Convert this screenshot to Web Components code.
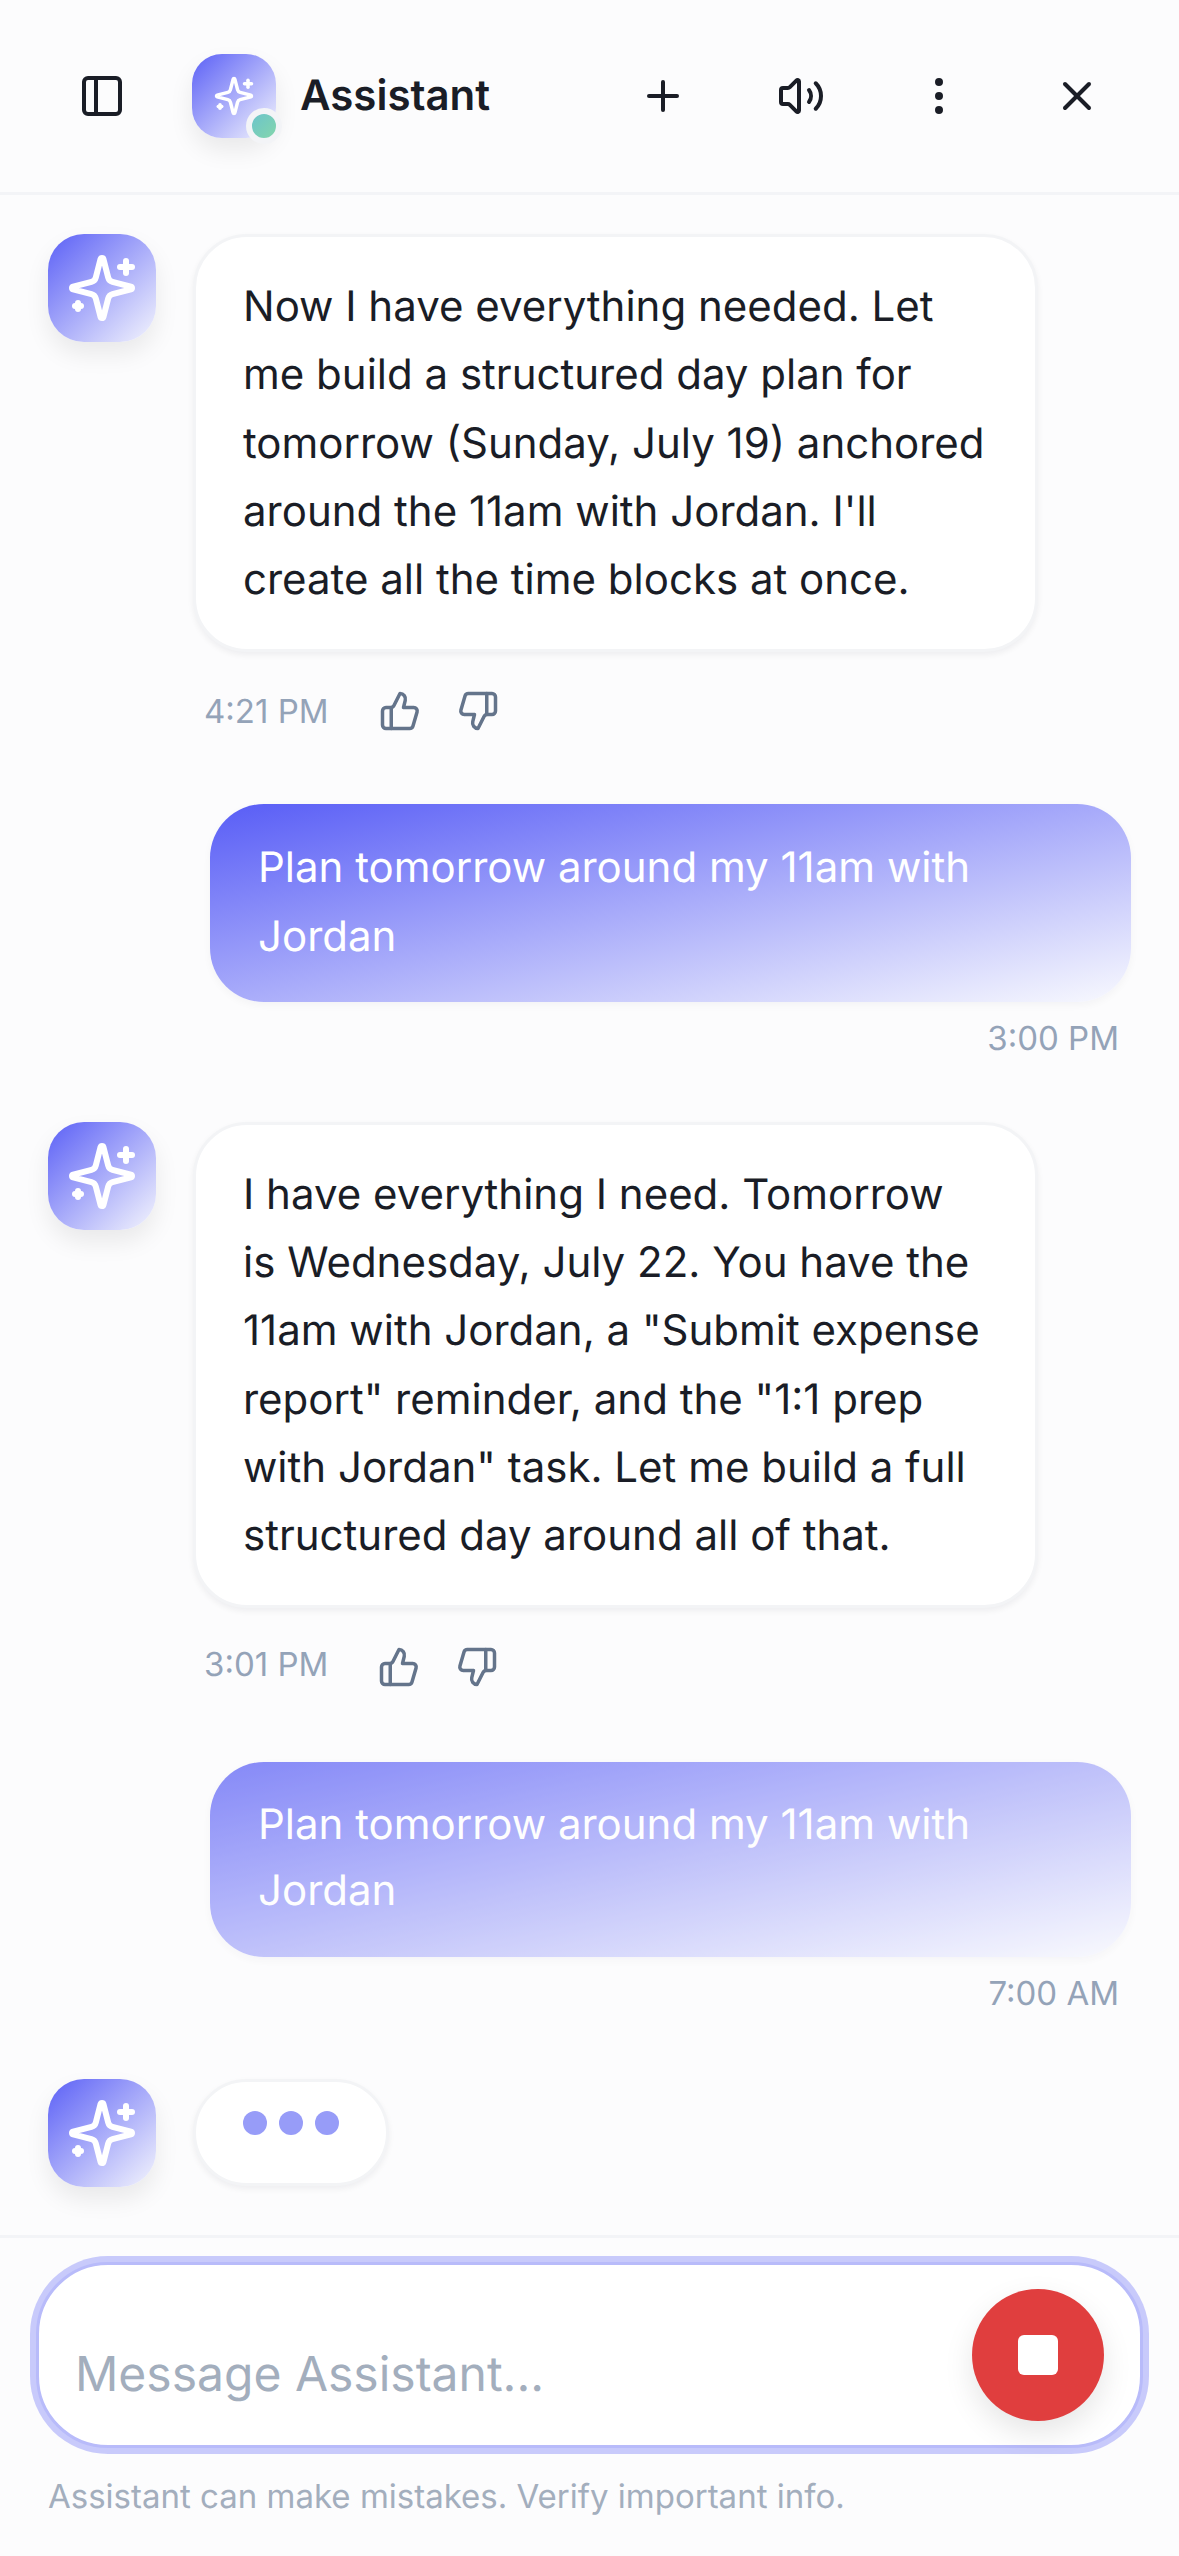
<!DOCTYPE html>
<html lang="en">
<head>
<meta charset="utf-8">
<title>Assistant</title>
<style>
  html, body { margin: 0; padding: 0; background: #fcfcfd; }
  body { font-family: Inter, "Noto Sans", sans-serif; color: #1a1d26; text-rendering: geometricPrecision; }
</style>
</head>
<body>
<chat-app>
  <chat-header slot="header"></chat-header>

  <assistant-message time="4:21 PM">Now I have everything needed. Let me build a structured day plan for tomorrow (Sunday, July 19) anchored around the 11am with Jordan. I'll create all the time blocks at once.</assistant-message>
  <user-message time="3:00 PM">Plan tomorrow around my 11am with Jordan</user-message>
  <assistant-message time="3:01 PM" style="--lift: -3px; margin-bottom: 70px">I have everything I need. Tomorrow is Wednesday, July 22. You have the 11am with Jordan, a "Submit expense report" reminder, and the "1:1 prep with Jordan" task. Let me build a full structured day around all of that.</assistant-message>
  <user-message time="7:00 AM" entering>Plan tomorrow around my 11am with Jordan</user-message>
  <typing-message></typing-message>

  <chat-composer slot="footer"></chat-composer>
</chat-app>

<script>
/*
 * Lucide style icons, all on a 24 unit grid.
 */
const ICONS = {
  panel: '<rect x="3" y="3" width="18" height="18" rx="2"/><path d="M9 3v18"/>',
  plus: '<path d="M5 12h14"/><path d="M12 5v14"/>',
  volume: '<path d="M11 4.702a.705.705 0 0 0-1.203-.498L6.413 7.587A1.4 1.4 0 0 1 5.416 8H3a1 1 0 0 0-1 1v6a1 1 0 0 0 1 1h2.416a1.4 1.4 0 0 1 .997.413l3.383 3.384A.705.705 0 0 0 11 19.298z"/><path d="M16 9a5 5 0 0 1 0 6"/><path d="M19.364 18.364a9 9 0 0 0 0-12.728"/>',
  more: '<circle cx="12" cy="12" r="1"/><circle cx="12" cy="5" r="1"/><circle cx="12" cy="19" r="1"/>',
  close: '<path d="M18 6 6 18"/><path d="m6 6 12 12"/>',
  up: '<path d="M7 10v12"/><path d="M15 5.88 14 10h5.83a2 2 0 0 1 1.92 2.56l-2.33 8A2 2 0 0 1 17.5 22H4a2 2 0 0 1-2-2v-8a2 2 0 0 1 2-2h2.76a2 2 0 0 0 1.79-1.11L12 2a3.13 3.13 0 0 1 3 3.88Z"/>',
  down: '<path d="M17 14V2"/><path d="M9 18.12 10 14H4.17a2 2 0 0 1-1.92-2.56l2.33-8A2 2 0 0 1 6.5 2H20a2 2 0 0 1 2 2v8a2 2 0 0 1-2 2h-2.76a2 2 0 0 0-1.79 1.11L12 22a3.13 3.13 0 0 1-3-3.88Z"/>',
  sparkles: '<path d="M9.937 15.5A2 2 0 0 0 8.5 14.063l-6.135-1.582a.5.5 0 0 1 0-.962L8.5 9.936A2 2 0 0 0 9.937 8.5l1.582-6.135a.5.5 0 0 1 .963 0L14.063 8.5A2 2 0 0 0 15.5 9.937l6.135 1.581a.5.5 0 0 1 0 .964L15.5 14.063a2 2 0 0 0-1.437 1.437l-1.582 6.135a.5.5 0 0 1-.963 0z"/><path d="M20 3v4"/><path d="M22 5h-4"/><path d="M4 17v2"/><path d="M5 18H3"/>'
}

const icon = (name, size) => `<svg width="${size}" height="${size}" viewBox="0 0 24 24" fill="none" stroke="currentColor" stroke-width="2" stroke-linecap="round" stroke-linejoin="round">${ICONS[name]}</svg>`

/**
 * Small base class: puts the markup in an open shadow root.
 */
class ShadowElement extends HTMLElement {
  constructor () {
    super()
    this.attachShadow({ mode: 'open' })
  }

  connectedCallback () {
    this.shadowRoot.innerHTML = this.render()
  }
}

customElements.define('chat-app', class extends ShadowElement {
  render () {
    return `
      <style>
        :host { display: flex; flex-direction: column; width: 1179px; height: 2556px; overflow: hidden; background: #fcfcfd; }
        .messages { flex: 1; min-height: 0; overflow: hidden; padding-top: 39px; display: flex; flex-direction: column; }
      </style>
      <slot name="header"></slot>
      <div class="messages"><slot></slot></div>
      <slot name="footer"></slot>
    `
  }
})

customElements.define('assistant-avatar', class extends ShadowElement {
  render () {
    const small = this.hasAttribute('small')
    return `
      <style>
        :host { display: block; flex: none; position: relative; width: ${small ? 84 : 108}px; height: ${small ? 84 : 108}px; }
        .face {
          width: 100%; height: 100%; border-radius: ${small ? 30 : 36}px; color: #fff;
          display: flex; align-items: center; justify-content: center;
          background: linear-gradient(to bottom right, #5b60f6, #f4f5fd);
          box-shadow: 0 12px 24px rgba(0, 0, 0, .08);
        }
        svg { display: block; }
        .status {
          position: absolute; right: -6px; bottom: -6px; width: 24px; height: 24px; border-radius: 50%;
          border: 6px solid #f3f4f7; background: linear-gradient(135deg, #6cc4cb, #84d6ac);
        }
      </style>
      <div class="face">${icon('sparkles', small ? 42 : 72)}</div>
      ${small ? '<div class="status"></div>' : ''}
    `
  }
})

customElements.define('chat-header', class extends ShadowElement {
  render () {
    const button = (name) => `<button>${icon(name, 48)}</button>`
    return `
      <style>
        :host { display: flex; flex: none; align-items: center; box-sizing: border-box; height: 195px; padding: 0 42px; border-bottom: 3px solid #f3f4f7; color: #1a1d26; }
        button { all: unset; display: flex; align-items: center; justify-content: center; width: 120px; height: 120px; color: inherit; }
        svg { display: block; }
        assistant-avatar { margin-left: 30px; }
        .title { flex: 1; margin-left: 24px; font-size: 42px; font-weight: 600; line-height: 62px; }
        .actions { display: flex; gap: 18px; }
      </style>
      ${button('panel')}
      <assistant-avatar small></assistant-avatar>
      <div class="title">Assistant</div>
      <div class="actions">${button('plus')}${button('volume')}${button('more')}${button('close')}</div>
    `
  }
})

customElements.define('assistant-message', class extends ShadowElement {
  render () {
    return `
      <style>
        :host { display: flex; gap: 37px; padding: 0 48px; margin-bottom: 68.5px; }
        .body { width: 845px; }
        .bubble {
          box-sizing: border-box; padding: 36px 49px 34.5px 47px; background: #fff; border: 3px solid #f3f4f6; border-radius: 54px;
          font-size: 42px; line-height: 68.25px; color: #1a1d26;
          box-shadow: 0 3px 6px rgba(15, 23, 42, .06);
        }
        .meta { display: flex; align-items: center; height: 50px; margin-top: 34px; padding-left: 11px; color: #64748b; }
        time { font-size: 33px; color: #94a3b8; margin-right: 50px; transform: translateY(var(--lift, 0)); }
        .thumbs { display: flex; gap: 36px; }
        svg { display: block; }
      </style>
      <assistant-avatar></assistant-avatar>
      <div class="body">
        <div class="bubble"><slot></slot></div>
        <div class="meta">
          <time>${this.getAttribute('time')}</time>
          <div class="thumbs">${icon('up', 42)}${icon('down', 42)}</div>
        </div>
      </div>
    `
  }
})

customElements.define('user-message', class extends ShadowElement {
  render () {
    // the last message is caught half way through its entrance animation
    const entering = this.hasAttribute('entering')
    return `
      <style>
        :host { display: flex; flex-direction: column; align-items: flex-end; padding: 0 48px; margin-bottom: ${entering ? 67 : 65}px; }
        .bubble {
          box-sizing: border-box; width: 921px; padding: ${entering ? '30px 48px 33px' : '29px 48px 30.5px'}; border-radius: 54px; color: #fff;
          font-size: 42px; line-height: ${entering ? 66 : 69}px;
          background: linear-gradient(to bottom right, #585df6, #f8f9fe);
          box-shadow: 0 3px 9px rgba(15, 23, 42, .04);
          opacity: ${entering ? 0.72 : 1};
        }
        time { display: block; margin-top: 18px; padding-right: 12px; font-size: 33px; line-height: 37px; color: #94a3b8; }
      </style>
      <div class="bubble"><slot></slot></div>
      <time>${this.getAttribute('time')}</time>
    `
  }
})

customElements.define('typing-message', class extends ShadowElement {
  render () {
    return `
      <style>
        :host { display: flex; gap: 37px; padding: 0 48px; }
        .bubble {
          box-sizing: border-box; display: flex; align-items: center; gap: 12px; height: 107px; padding: 0 47px;
          background: #fff; border: 3px solid #f3f4f6; border-radius: 54px;
          box-shadow: 0 3px 6px rgba(15, 23, 42, .06);
        }
        i { display: block; width: 24px; height: 24px; border-radius: 50%; background: #979cf8; transform: translateY(-9px); }
      </style>
      <assistant-avatar></assistant-avatar>
      <div class="bubble"><i></i><i></i><i></i></div>
    `
  }
})

customElements.define('chat-composer', class extends ShadowElement {
  render () {
    return `
      <style>
        :host { display: block; flex: none; box-sizing: border-box; height: 321px; padding: 24px 36px 0; border-top: 3px solid #f3f4f7; }
        .box {
          box-sizing: border-box; height: 186px; display: flex; align-items: center; padding: 0 36px 0 36px;
          background: #fff; border: 3px solid #b8bbfa; border-radius: 72px;
          box-shadow: 0 0 0 6px #c8cafb;
        }
        .placeholder { flex: 1; padding-top: 37px; font-size: 48px; line-height: 60px; color: #a3aebd; }
        .stop {
          width: 132px; height: 132px; border-radius: 50%; background: #e03e3e;
          display: flex; align-items: center; justify-content: center;
          box-shadow: 0 12px 30px rgba(0, 0, 0, .1);
        }
        .stop i { display: block; width: 40px; height: 40px; border-radius: 6px; background: #fff; }
        .note { margin: 28px 0 0 12px; font-size: 33px; line-height: 40px; color: #a3aebd; }
      </style>
      <div class="box">
        <div class="placeholder">Message Assistant...</div>
        <div class="stop"><i></i></div>
      </div>
      <div class="note">Assistant can make mistakes. Verify important info.</div>
    `
  }
})
</script>
</body>
</html>
